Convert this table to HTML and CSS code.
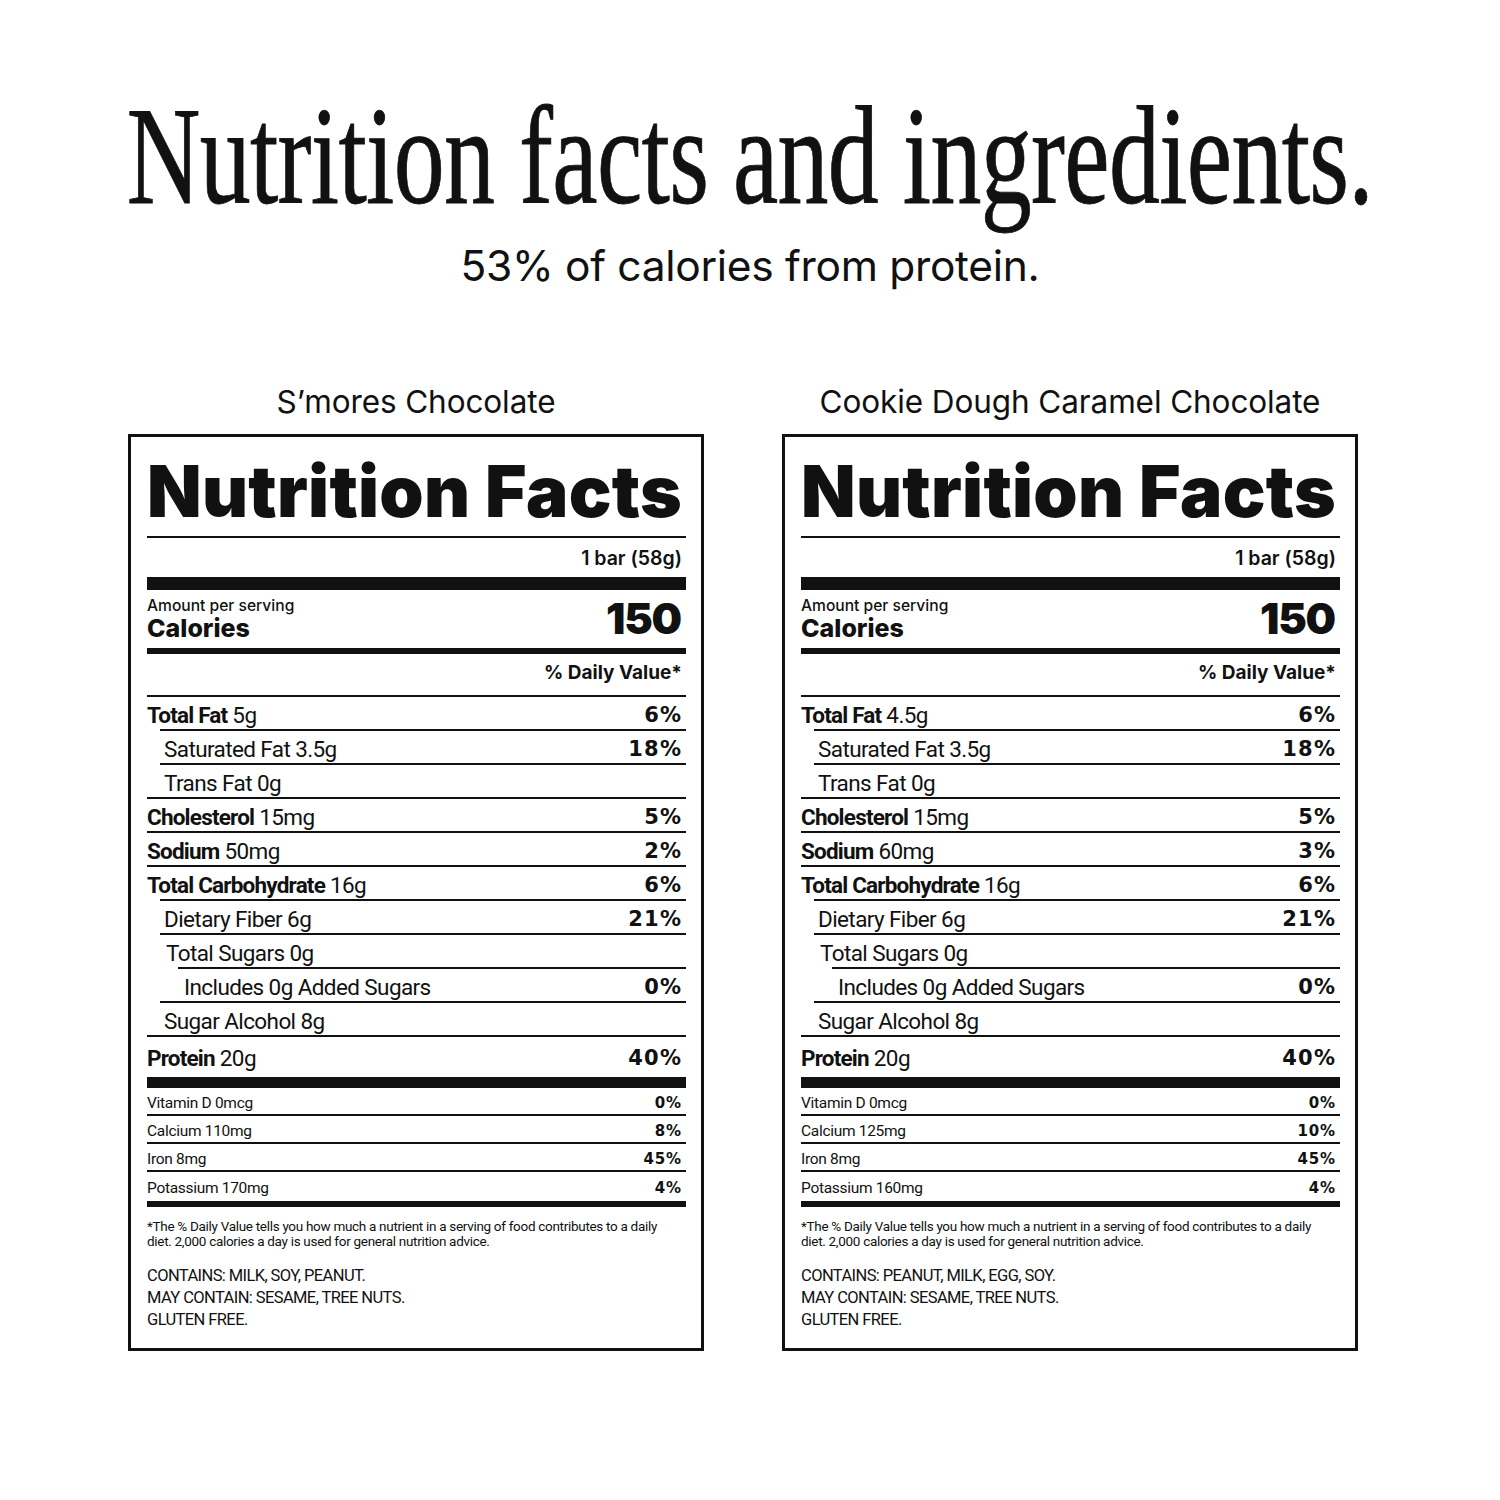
FILE: index.html
```html
<!DOCTYPE html>
<html lang="en">
<head>
<meta charset="utf-8">
<title>Nutrition facts and ingredients</title>
<link rel="stylesheet" href="styles.css">
</head>
<body>
<div class="page">
  <header class="hero">
    <h1 class="title"><span class="title-text">Nutrition facts and ingredients.</span></h1>
    <p class="sub">53% of calories from protein.</p>
  </header>

  <div class="panels">
    <section class="panel">
      <h2 class="flavor">S’mores Chocolate</h2>
      <div class="label">
        <div class="nf-title">Nutrition Facts</div>
        <div class="rule"></div>
        <div class="serving">1 bar (58g)</div>
        <div class="bar-thick"></div>
        <div class="cal">
          <div class="cal-left">
            <div class="aps">Amount per serving</div>
            <div class="cal-word">Calories</div>
          </div>
          <div class="cal-num">150</div>
        </div>
        <div class="bar-med"></div>
        <div class="dv-head">% Daily Value*</div>
        <div class="rule"></div>

        <div class="row"><span class="nm"><b>Total Fat</b> 5g</span><span class="pct">6%</span></div>
        <div class="rule in1"></div>
        <div class="row ind1"><span class="nm">Saturated Fat 3.5g</span><span class="pct">18%</span></div>
        <div class="rule in1"></div>
        <div class="row ind1"><span class="nm">Trans Fat 0g</span></div>
        <div class="rule"></div>
        <div class="row"><span class="nm"><b>Cholesterol</b> 15mg</span><span class="pct">5%</span></div>
        <div class="rule"></div>
        <div class="row"><span class="nm"><b>Sodium</b> 50mg</span><span class="pct">2%</span></div>
        <div class="rule"></div>
        <div class="row"><span class="nm"><b>Total Carbohydrate</b> 16g</span><span class="pct">6%</span></div>
        <div class="rule in1"></div>
        <div class="row ind1"><span class="nm">Dietary Fiber 6g</span><span class="pct">21%</span></div>
        <div class="rule in1"></div>
        <div class="row ind1b"><span class="nm">Total Sugars 0g</span></div>
        <div class="rule in2"></div>
        <div class="row ind2"><span class="nm">Includes 0g Added Sugars</span><span class="pct">0%</span></div>
        <div class="rule in1"></div>
        <div class="row ind1"><span class="nm">Sugar Alcohol 8g</span></div>
        <div class="rule"></div>
        <div class="row protein"><span class="nm"><b>Protein</b> 20g</span><span class="pct">40%</span></div>
        <div class="bar-prot"></div>

        <div class="vrow"><span class="vnm">Vitamin D 0mcg</span><span class="vpct">0%</span></div>
        <div class="rule"></div>
        <div class="vrow"><span class="vnm">Calcium 110mg</span><span class="vpct">8%</span></div>
        <div class="rule"></div>
        <div class="vrow"><span class="vnm">Iron 8mg</span><span class="vpct">45%</span></div>
        <div class="rule"></div>
        <div class="vrow last"><span class="vnm">Potassium 170mg</span><span class="vpct">4%</span></div>
        <div class="bar-med"></div>

        <p class="foot">*The % Daily Value tells you how much a nutrient in a serving of food contributes to a daily<br>diet. 2,000 calories a day is used for general nutrition advice.</p>
        <p class="contains">CONTAINS: MILK, SOY, PEANUT.<br>MAY CONTAIN: SESAME, TREE NUTS.<br>GLUTEN FREE.</p>
      </div>
    </section>

    <section class="panel">
      <h2 class="flavor">Cookie Dough Caramel Chocolate</h2>
      <div class="label">
        <div class="nf-title">Nutrition Facts</div>
        <div class="rule"></div>
        <div class="serving">1 bar (58g)</div>
        <div class="bar-thick"></div>
        <div class="cal">
          <div class="cal-left">
            <div class="aps">Amount per serving</div>
            <div class="cal-word">Calories</div>
          </div>
          <div class="cal-num">150</div>
        </div>
        <div class="bar-med"></div>
        <div class="dv-head">% Daily Value*</div>
        <div class="rule"></div>

        <div class="row"><span class="nm"><b>Total Fat</b> 4.5g</span><span class="pct">6%</span></div>
        <div class="rule in1"></div>
        <div class="row ind1"><span class="nm">Saturated Fat 3.5g</span><span class="pct">18%</span></div>
        <div class="rule in1"></div>
        <div class="row ind1"><span class="nm">Trans Fat 0g</span></div>
        <div class="rule"></div>
        <div class="row"><span class="nm"><b>Cholesterol</b> 15mg</span><span class="pct">5%</span></div>
        <div class="rule"></div>
        <div class="row"><span class="nm"><b>Sodium</b> 60mg</span><span class="pct">3%</span></div>
        <div class="rule"></div>
        <div class="row"><span class="nm"><b>Total Carbohydrate</b> 16g</span><span class="pct">6%</span></div>
        <div class="rule in1"></div>
        <div class="row ind1"><span class="nm">Dietary Fiber 6g</span><span class="pct">21%</span></div>
        <div class="rule in1"></div>
        <div class="row ind1b"><span class="nm">Total Sugars 0g</span></div>
        <div class="rule in2"></div>
        <div class="row ind2"><span class="nm">Includes 0g Added Sugars</span><span class="pct">0%</span></div>
        <div class="rule in1"></div>
        <div class="row ind1"><span class="nm">Sugar Alcohol 8g</span></div>
        <div class="rule"></div>
        <div class="row protein"><span class="nm"><b>Protein</b> 20g</span><span class="pct">40%</span></div>
        <div class="bar-prot"></div>

        <div class="vrow"><span class="vnm">Vitamin D 0mcg</span><span class="vpct">0%</span></div>
        <div class="rule"></div>
        <div class="vrow"><span class="vnm">Calcium 125mg</span><span class="vpct">10%</span></div>
        <div class="rule"></div>
        <div class="vrow"><span class="vnm">Iron 8mg</span><span class="vpct">45%</span></div>
        <div class="rule"></div>
        <div class="vrow last"><span class="vnm">Potassium 160mg</span><span class="vpct">4%</span></div>
        <div class="bar-med"></div>

        <p class="foot">*The % Daily Value tells you how much a nutrient in a serving of food contributes to a daily<br>diet. 2,000 calories a day is used for general nutrition advice.</p>
        <p class="contains">CONTAINS: PEANUT, MILK, EGG, SOY.<br>MAY CONTAIN: SESAME, TREE NUTS.<br>GLUTEN FREE.</p>
      </div>
    </section>
  </div>
</div>
</body>
</html>
```

FILE: styles.css
```css
* { box-sizing: border-box; }

html, body {
  margin: 0;
  padding: 0;
  background: #ffffff;
  color: #111111;
}

.page {
  width: 1500px;
  min-height: 1500px;
  overflow: hidden;
  font-family: "Inter", "Roboto", "Liberation Sans", sans-serif;
}

/* ---------- hero ---------- */
.hero {
  text-align: center;
}

.title {
  margin: 0;
  padding-top: 86px;
  height: 226px;
  display: flex;
  justify-content: center;
  font-family: "Liberation Serif", "Times New Roman", serif;
  font-weight: 400;
  font-size: 140px;
  line-height: 140px;
  letter-spacing: -1px;
  white-space: nowrap;
}

.title-text {
  display: block;
  flex: none;
  transform: scaleX(0.729);
  transform-origin: center;
  -webkit-text-stroke: 0.8px #111;
}

.sub {
  margin: 19px 0 0;
  font-family: "Inter", "Roboto", sans-serif;
  font-weight: 400;
  font-size: 42.5px;
  line-height: 41px;
  letter-spacing: -0.3px;
}

/* ---------- panels ---------- */
.panels {
  display: flex;
  gap: 78px;
  padding-left: 128px;
  margin-top: 99px;
}

.panel {
  width: 576px;
}

.flavor {
  margin: 0 0 16px;
  text-align: center;
  font-family: "Inter", "Roboto", sans-serif;
  font-weight: 400;
  font-size: 31.5px;
  line-height: 33px;
  letter-spacing: -0.1px;
}

.label {
  border: 3px solid #111;
  padding: 0 15px 17px 16px;
}

.rule {
  height: 2px;
  background: #111;
}
.rule.in1 { margin-left: 13px; }
.rule.in2 { margin-left: 31px; }

.nf-title {
  height: 99px;
  padding-top: 19px;
  font-family: "Inter", "Roboto", sans-serif;
  font-weight: 900;
  font-size: 71px;
  line-height: 71px;
  letter-spacing: 0.3px;
  white-space: nowrap;
}

.serving {
  height: 39px;
  display: flex;
  align-items: center;
  justify-content: flex-end;
  padding-right: 4px;
  font-weight: 600;
  font-size: 19.5px;
  letter-spacing: 0;
}

.bar-thick { height: 13px; background: #111; }
.bar-med { height: 6px; background: #111; }
.bar-prot { height: 11px; background: #111; }

.cal {
  height: 58px;
  display: flex;
  justify-content: space-between;
  align-items: flex-start;
  padding-top: 7px;
}

.aps {
  font-weight: 500;
  font-size: 15.6px;
  line-height: 18px;
  letter-spacing: 0;
}

.cal-word {
  font-weight: 800;
  font-size: 25px;
  line-height: 26px;
  letter-spacing: 0;
}

.cal-num {
  font-weight: 900;
  font-size: 43px;
  line-height: 43px;
  letter-spacing: -1.2px;
  padding-right: 5px;
}

.dv-head {
  height: 41px;
  display: flex;
  align-items: center;
  justify-content: flex-end;
  padding-bottom: 4px;
  padding-right: 4px;
  font-weight: 700;
  font-size: 19px;
  letter-spacing: 0;
}

/* ---------- nutrient rows ---------- */
.row {
  height: 32px;
  display: flex;
  align-items: center;
  justify-content: space-between;
  padding-top: 4px;
  padding-right: 5px;
}

.row.ind1 { padding-left: 17px; }
.row.ind1b { padding-left: 19px; }
.row.ind2 { padding-left: 37px; }
.row.protein { height: 40px; padding-top: 2px; }

.nm {
  font-family: "Roboto", "Liberation Sans", sans-serif;
  font-weight: 400;
  font-size: 22.5px;
  letter-spacing: -0.6px;
  white-space: nowrap;
}

.nm b {
  font-weight: 700;
  letter-spacing: -0.8px;
}

.pct {
  font-family: "DejaVu Sans", "Liberation Sans", sans-serif;
  font-weight: 700;
  font-size: 21px;
  letter-spacing: 1.2px;
  margin-right: -1.2px;
}

.vrow {
  height: 26px;
  display: flex;
  align-items: center;
  justify-content: space-between;
  padding-top: 3px;
  padding-right: 5px;
}
.vrow.last { height: 29px; }

.vnm {
  font-family: "Roboto", "Liberation Sans", sans-serif;
  font-size: 15.5px;
  letter-spacing: -0.3px;
}

.vpct {
  font-family: "DejaVu Sans", "Liberation Sans", sans-serif;
  font-weight: 700;
  font-size: 15px;
  letter-spacing: 0.8px;
  margin-right: -0.8px;
}

.foot {
  margin: 12px 0 0;
  font-family: "Roboto", "Liberation Sans", sans-serif;
  font-size: 13.5px;
  line-height: 15px;
  letter-spacing: -0.3px;
  white-space: nowrap;
}

.contains {
  margin: 16px 0 0;
  font-family: "Roboto", "Liberation Sans", sans-serif;
  font-size: 16.5px;
  line-height: 22px;
  letter-spacing: -0.6px;
}
```
